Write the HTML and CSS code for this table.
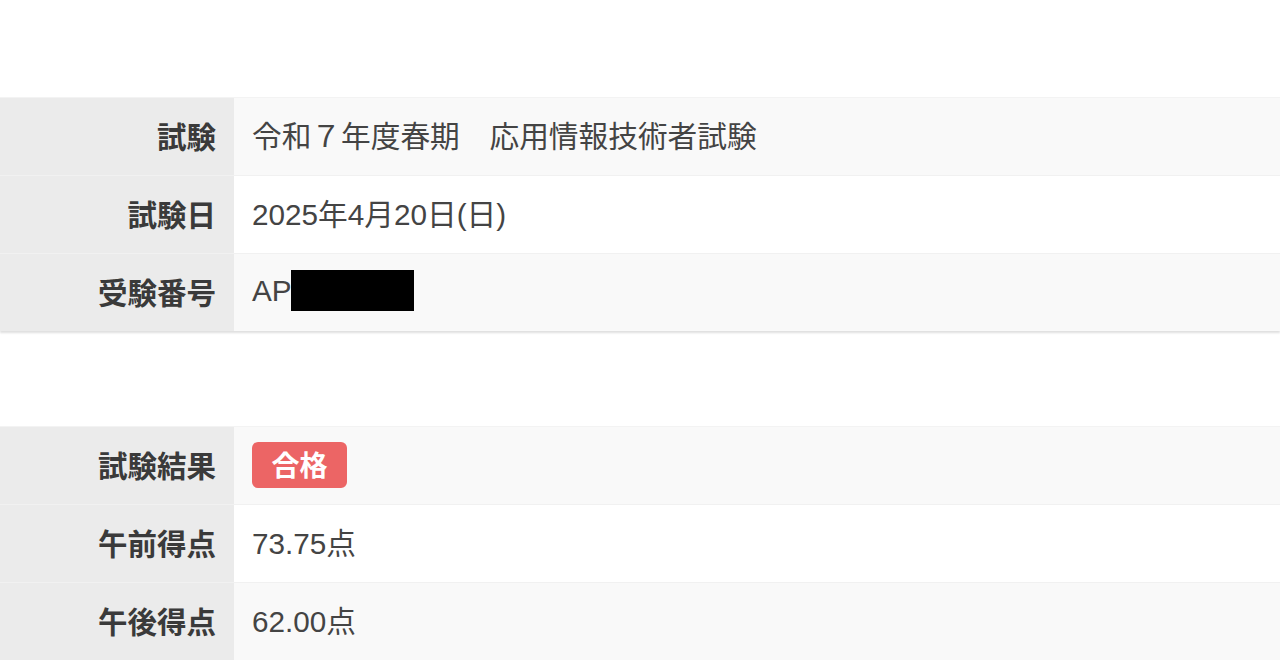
FILE: index.html
```html
<!DOCTYPE html>
<html lang="ja">
<head>
<meta charset="utf-8">
<title>試験結果</title>
<link rel="stylesheet" href="styles.css">
</head>
<body>
<main class="page">
  <section class="info">
    <div class="row odd">
      <div class="label">試験</div>
      <div class="value">令和７年度春期　応用情報技術者試験</div>
    </div>
    <div class="row">
      <div class="label">試験日</div>
      <div class="value">2025年4月20日(日)</div>
    </div>
    <div class="row odd">
      <div class="label">受験番号</div>
      <div class="value">AP<span class="mask"></span></div>
    </div>
  </section>
  <section class="info">
    <div class="row odd">
      <div class="label">試験結果</div>
      <div class="value"><span class="badge">合格</span></div>
    </div>
    <div class="row">
      <div class="label">午前得点</div>
      <div class="value">73.75点</div>
    </div>
    <div class="row odd">
      <div class="label">午後得点</div>
      <div class="value">62.00点</div>
    </div>
  </section>
</main>
</body>
</html>
```
FILE: styles.css
```css
html, body {
  margin: 0;
  padding: 0;
  background: #ffffff;
}
body {
  font-family: "Noto Sans CJK JP", "Noto Sans", sans-serif;
  color: #444444;
}
.page {
  padding-top: 97px;
  display: flex;
  flex-direction: column;
  gap: 95px;
}
.info {
  display: flex;
  flex-direction: column;
  box-shadow: 0 2px 2px rgba(0, 0, 0, 0.13);
}
.row {
  display: grid;
  grid-template-columns: 234px 1fr;
  height: 77px;
  border-top: 1px solid #f1f1f1;
}
.row:first-child {
  border-top: 1px solid #f3f3f3;
}
.label {
  background: #ebebeb;
  display: flex;
  align-items: center;
  justify-content: flex-end;
  padding-right: 18px;
  padding-bottom: 4px;
  font-size: 29.5px;
  font-weight: 700;
  color: #3a3a3a;
}
.value {
  background: #ffffff;
  display: flex;
  align-items: center;
  padding-left: 18px;
  padding-bottom: 4px;
  font-size: 29.7px;
  color: #444444;
  font-family: "Liberation Sans", "Noto Sans CJK JP", sans-serif;
}
.row.odd .value {
  background: #f9f9f9;
}
.mask {
  display: inline-block;
  width: 123px;
  height: 41px;
  background: #000000;
  margin-left: -1px;
}
.badge {
  display: inline-flex;
  align-items: center;
  justify-content: center;
  width: 95px;
  height: 46px;
  margin-top: 2px;
  border-radius: 6px;
  background: #ec6565;
  color: #ffffff;
  font-family: "Noto Sans CJK JP", sans-serif;
  font-weight: 700;
  font-size: 28px;
  padding-bottom: 2px;
  box-sizing: border-box;
}
```
